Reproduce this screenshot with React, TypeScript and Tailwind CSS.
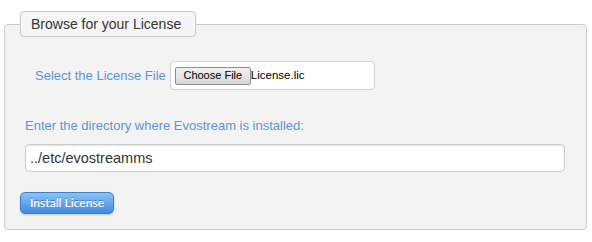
export default function App() {
  return (
    <div className="w-[592px] h-[242px] bg-white pl-[4px] pt-[11px] font-['Liberation_Sans',Arial,sans-serif]">
      <fieldset className="w-[583px] border border-[#cdcdcd] rounded-[4px] bg-[#f3f3f3] pt-[24px] pb-[15px] pl-[20px] pr-[20px] m-0">
        <legend className="ml-[-5px] w-[176px] h-[26px] pl-[10px] flex items-center border border-[#c8c8c8] rounded-[4px] bg-[#f5f5f5] text-[14px] text-[#333]">
          Browse for your License
        </legend>

        {/* file row */}
        <div className="flex items-center ml-[10px] h-[29px]">
          <span className="text-[13px] text-[#5b93d3] mr-[4px]">Select the License File</span>
          <div className="w-[205px] h-[29px] bg-white border border-[#d0d0d0] rounded-[4px] flex items-center pl-[4px]">
            <button className="h-[18px] w-[76px] border border-[#8f8f8f] rounded-[2px] bg-gradient-to-b from-[#f2f2f2] to-[#d8d8d8] text-[11px] text-black leading-none">
              Choose File
            </button>
            <span className="text-[11.5px] text-black">License.lic</span>
          </div>
        </div>

        <div className="mt-[28px] text-[13px] leading-[15px] text-[#5b93d3]">
          Enter the directory where Evostream is installed:
        </div>

        <input
          className="mt-[11px] block w-[540px] h-[28px] bg-white border border-[#cccccc] rounded-[4px] px-[4px] text-[14.5px] text-[#333] shadow-[inset_0_1px_2px_rgba(0,0,0,0.1)] outline-none"
          defaultValue="../etc/evostreamms"
        />

        <button className="mt-[20px] ml-[-5px] block w-[94px] h-[22px] rounded-[5px] border border-[#3f7fca] bg-gradient-to-b from-[#8cc3f5] to-[#3c8ae0] text-white text-[12px] font-semibold font-['Lato',sans-serif] [text-shadow:0_-1px_0_rgba(0,0,0,0.3)] shadow-[0_1px_2px_rgba(0,0,0,0.2)]">
          Install License
        </button>
      </fieldset>
    </div>
  );
}
